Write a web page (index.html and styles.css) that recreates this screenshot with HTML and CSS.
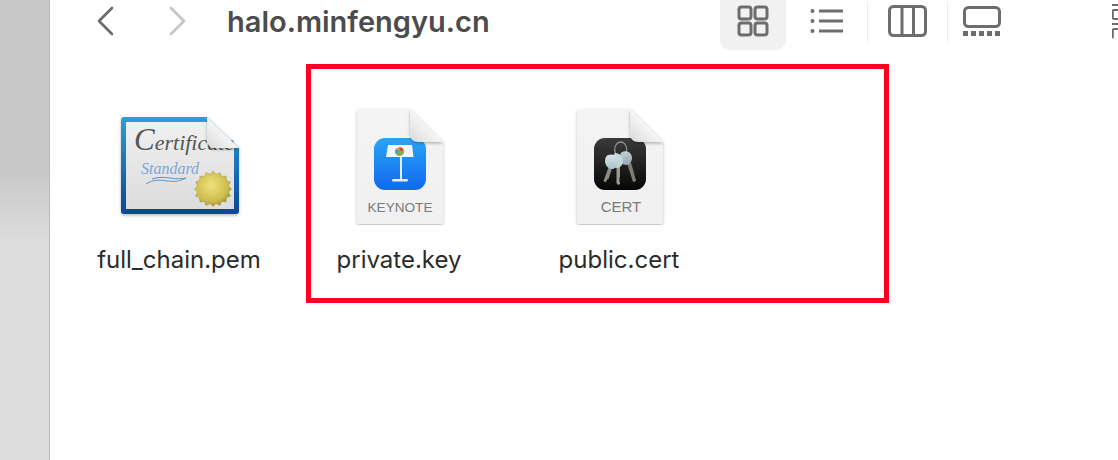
FILE: index.html
```html
<!DOCTYPE html>
<html lang="en">
<head>
<meta charset="utf-8">
<title>halo.minfengyu.cn</title>
<link rel="stylesheet" href="styles.css">
</head>
<body>
<div class="window">
  <aside class="sidebar"></aside>
  <main class="main">
    <header class="toolbar">
      <svg class="nav" width="18" height="30" viewBox="0 0 18 30"><path d="M16 2 3 15l13 13" class="chev"/></svg>
      <svg class="nav nav-forward" width="18" height="30" viewBox="0 0 18 30"><path d="M2 2l13 13L2 28" class="chev chev-off"/></svg>
      <h1 class="title">halo.minfengyu.cn</h1>
      <div class="tools">
        <div class="tool tool-active">
          <svg width="32" height="32" viewBox="0 0 32 32" class="ico"><rect x="2" y="2" width="12" height="12" rx="2.5"/><rect x="18" y="2" width="12" height="12" rx="2.5"/><rect x="2" y="18" width="12" height="12" rx="2.5"/><rect x="18" y="18" width="12" height="12" rx="2.5"/></svg>
        </div>
        <div class="tool tool-list">
          <svg width="34" height="26" viewBox="0 0 34 26" class="ico"><path d="M9 3h24M9 13h24M9 23h24"/><circle cx="2.5" cy="3" r="2" class="dot"/><circle cx="2.5" cy="13" r="2" class="dot"/><circle cx="2.5" cy="23" r="2" class="dot"/></svg>
        </div>
        <span class="sep"></span>
        <div class="tool tool-cols">
          <svg width="39" height="32" viewBox="0 0 39 32" class="ico"><rect x="1.500" y="1.500" width="36" height="29" rx="4"/><path d="M14 1.500v29M25.500 1.500v29"/></svg>
        </div>
        <span class="sep sep-2"></span>
        <div class="tool tool-gallery">
          <svg width="38" height="30" viewBox="0 0 38 30" class="ico"><rect x="1.500" y="1.500" width="35" height="19" rx="4"/><g class="dots"><rect x="0" y="25" width="5" height="5"/><rect x="8" y="25" width="5" height="5"/><rect x="16" y="25" width="5" height="5"/><rect x="24" y="25" width="5" height="5"/><rect x="32" y="25" width="5" height="5"/></g></svg>
        </div>
        <div class="tool-stub">
          <svg width="6" height="36" viewBox="0 0 6 36" class="ico ico-thin"><path d="M0 1h6M6 6H2a1.200 1.200 0 0 0-1.200 1.200v6.600A1.200 1.200 0 0 0 2 15h4M0 20h6M6 25H2a1.200 1.200 0 0 0-1.200 1.200v8"/></svg>
        </div>
      </div>
    </header>

    <section class="files">
      <figure class="file">
        <svg class="icon" width="140" height="120" viewBox="0 0 140 120">
          <defs>
            <linearGradient id="frame" x1="0" y1="0" x2="0" y2="1"><stop offset="0" stop-color="#2f9fd2"/><stop offset=".5" stop-color="#1b72b6"/><stop offset="1" stop-color="#0b4795"/></linearGradient>
            <linearGradient id="paper" x1="0" y1="0" x2="0" y2="1"><stop offset="0" stop-color="#f0f0f0"/><stop offset="1" stop-color="#dcdcdc"/></linearGradient>
            <linearGradient id="fold" x1="0" y1="1" x2="1" y2="0"><stop offset="0" stop-color="#d9d9d9"/><stop offset=".55" stop-color="#f8f8f8"/><stop offset="1" stop-color="#fff"/></linearGradient>
            <radialGradient id="seal" cx=".45" cy=".4" r=".65"><stop offset="0" stop-color="#efe27f"/><stop offset=".7" stop-color="#cdbc4c"/><stop offset="1" stop-color="#8f852a"/></radialGradient>
            <linearGradient id="doc" x1="0" y1="0" x2="0" y2="1"><stop offset="0" stop-color="#f4f4f4"/><stop offset="1" stop-color="#f0f0f0"/></linearGradient>
            <linearGradient id="knt" x1="0" y1="0" x2="0" y2="1"><stop offset="0" stop-color="#28a6f5"/><stop offset="1" stop-color="#1268f0"/></linearGradient>
            <linearGradient id="blk" x1="0" y1="0" x2="0" y2="1"><stop offset="0" stop-color="#3b3b3b"/><stop offset="1" stop-color="#060606"/></linearGradient>
            <linearGradient id="head" x1="0" y1="0" x2="0" y2="1"><stop offset="0" stop-color="#d8e6e9"/><stop offset="1" stop-color="#a9c2cb"/></linearGradient>
            <filter id="sh" x="-10%" y="-10%" width="120%" height="120%"><feDropShadow dx="0" dy="1.500" stdDeviation="1.500" flood-color="#000" flood-opacity=".28"/></filter>
          </defs>
          <path d="M14 12h83l32 31v63a3 3 0 0 1-3 3H14a3 3 0 0 1-3-3V15a3 3 0 0 1 3-3z" fill="url(#frame)" filter="url(#sh)"/>
          <path d="M16 17h81l27 26v61H16z" fill="url(#paper)"/>
          <text x="24" y="45" class="cert-a"><tspan class="cert-cap">C</tspan>ertificate</text>
          <text x="31" y="69" class="cert-b">Standard</text>
          <path d="M36 79c8-5 14-4 22-3 7 1 12 0 18-3" class="swash"/>
          <path d="M42 74c6-2 12-2 18-1s11 1 16 0" class="swash"/>
          <path d="M103 66l3 3.500 4-2 1.500 4 4.500-.5.500 4.500 4 1.500-2 4 3 3-3 3 2 4-4 1.500-.5 4.500-4.500-.5-1.500 4-4-2-3 3-3-3-4 2-1.500-4-4.500.5-.5-4.500-4-1.500 2-4-3-3 3-3-2-4 4-1.500.5-4.500 4.500.5 1.500-4 4 2z" fill="url(#seal)" stroke="#a59b3e" stroke-width=".5"/>
          <path d="M97 12l32 31H106c-6 0-9-3-9-9z" fill="url(#fold)" filter="url(#sh)"/>
        </svg>
        <figcaption class="name">full_chain.pem</figcaption>
      </figure>

      <figure class="file">
        <svg class="icon" width="140" height="120" viewBox="0 0 140 120">
          <path d="M30 4h50l33 33v79a3 3 0 0 1-3 3H30a3 3 0 0 1-3-3V7a3 3 0 0 1 3-3z" fill="url(#doc)" filter="url(#sh)"/>
          <rect x="44" y="33" width="52" height="52" rx="11" fill="url(#knt)"/>
          <path d="M58 40h24l1.500 12H56z" fill="#f4f7fb"/>
          <circle cx="69.500" cy="46.500" r="4.300" fill="#e9a12d"/>
          <path d="M69.500 46.500V42.200a4.300 4.300 0 0 1 4.200 3.400z" fill="#d8453e"/>
          <path d="M69.500 46.500l-3.600 2.400a4.300 4.300 0 0 1 .3-5.200z" fill="#3f9be0"/>
          <path d="M69.500 46.500l4.200-.9a4.300 4.300 0 0 1-7.800 3.300z" fill="#6cb944"/>
          <rect x="70" y="52" width="2" height="23" fill="#e6eef8"/>
          <rect x="62" y="74" width="16" height="2.500" rx="1.200" fill="#e6eef8"/>
          <text x="70" y="107" class="doc-label doc-label-k">KEYNOTE</text>
          <path d="M80 4l33 33H89c-6 0-9-3-9-9z" fill="url(#fold)" filter="url(#sh)"/>
        </svg>
        <figcaption class="name">private.key</figcaption>
      </figure>

      <figure class="file">
        <svg class="icon" width="140" height="120" viewBox="0 0 140 120">
          <path d="M30 4h50l33 33v79a3 3 0 0 1-3 3H30a3 3 0 0 1-3-3V7a3 3 0 0 1 3-3z" fill="url(#doc)" filter="url(#sh)"/>
          <rect x="44" y="33" width="52" height="52" rx="11" fill="url(#blk)"/>
          <ellipse cx="70.700" cy="44.500" rx="6" ry="7.500" fill="none" stroke="#8f8f8f" stroke-width="1.300"/>
          <path d="M59 61 53.500 76l1.500 1 1.500-.5.500-2 1.500-.5 4-12z" fill="#8d8a80"/>
          <path d="M66.500 61v17l1.500 2 2-1v-2l-1-1 1-1.500-1-1.500 1-1V61z" fill="#9a978c"/>
          <path d="M77 58l6 19 2-.5 1-1-5-18z" fill="#7f7c72"/>
          <path d="M72 47c5-2 10 1 10 6 0 4-3 7-6 7-4 0-6-3-6-6s0-6 2-7z" fill="url(#head)" opacity=".85"/>
          <path d="M65 48c5 0 8 4 8 8s-3 7-6 7-5-3-5-6 1-7 3-9z" fill="#c2d6dc"/>
          <path d="M58 50c6-2 10 2 10 7s-3 7-6 7-7-3-7-8c0-3 1-5 3-6z" fill="url(#head)"/>
          <text x="71" y="107" class="doc-label">CERT</text>
          <path d="M80 4l33 33H89c-6 0-9-3-9-9z" fill="url(#fold)" filter="url(#sh)"/>
        </svg>
        <figcaption class="name">public.cert</figcaption>
      </figure>
    </section>
  </main>
  <div class="highlight"></div>
</div>
</body>
</html>
```

FILE: styles.css
```css
* { box-sizing: border-box; }
html, body { margin: 0; padding: 0; }
body {
  background: #fff;
  font-family: "Inter", "Liberation Sans", sans-serif;
  overflow: hidden;
}
.window {
  position: relative;
  display: flex;
  width: 1118px;
  height: 460px;
}
.sidebar {
  width: 50px;
  flex: none;
  background: linear-gradient(#c8c8c8 0, #c8c8c8 170px, #dddddd 245px, #dddddd 100%);
  border-right: 1px solid #bcbcbc;
}
.main {
  flex: 1;
  min-width: 0;
  display: flex;
  flex-direction: column;
}
.toolbar {
  display: flex;
  align-items: flex-start;
  height: 50px;
  padding-left: 46px;
}
.nav { margin-top: 6px; flex: none; }
.nav-forward { margin-left: 55px; }
.chev {
  fill: none;
  stroke: #6a6a6a;
  stroke-width: 2.600;
  stroke-linecap: round;
  stroke-linejoin: round;
}
.chev-off { stroke: #c4c4c4; }
.title {
  margin: 0 0 0 40px;
  font-size: 29px;
  line-height: 44px;
  font-weight: 600;
  color: #4c4c4c;
  white-space: nowrap;
}
.tools {
  width: 398px;
  margin-left: auto;
  display: flex;
  align-items: flex-start;
}
.ico { display: block; fill: none; stroke: #6d6d6d; stroke-width: 3; }
.ico-thin { stroke-width: 2; }
.ico .dot { fill: #6d6d6d; stroke: none; }
.ico .dots rect { fill: #6d6d6d; stroke: none; }
.tool-active {
  width: 66px;
  height: 50px;
  padding: 5px 0 0 17px;
  background: #f1f1f1;
  border-radius: 0 0 10px 10px;
}
.tool-list { margin: 8px 0 0 24px; }
.sep {
  width: 1px;
  height: 40px;
  margin: 2px 0 0 23px;
  background: #ececec;
}
.tool-cols { margin: 5px 0 0 20px; }
.sep-2 { margin-left: 20px; }
.tool-gallery { margin: 6px 0 0 15px; }
.tool-stub { margin: 4px 0 0 auto; }
.files {
  display: flex;
  padding: 55px 0 0 20px;
}
.file {
  width: 220px;
  margin: 0;
  display: flex;
  flex-direction: column;
  align-items: center;
}
.icon { display: block; }
.name {
  margin: 20px 2px 0 0;
  font-size: 24px;
  line-height: 30px;
  color: #2b2b2b;
  white-space: nowrap;
}
.doc-label {
  font-family: "Liberation Sans", sans-serif;
  font-size: 15px;
  fill: #7a7a7a;
  text-anchor: middle;
}
.doc-label-k { font-size: 13.600px; }
.cert-a {
  font-family: "Liberation Serif", serif;
  font-style: italic;
  font-size: 22px;
  fill: #555;
}
.cert-cap { font-size: 31px; }
.cert-b {
  font-family: "Liberation Serif", serif;
  font-style: italic;
  font-size: 16px;
  fill: #7ba6da;
}
.swash { fill: none; stroke: #5c93cf; stroke-width: 1; }
.highlight {
  position: absolute;
  left: 306px;
  top: 64px;
  width: 583px;
  height: 239px;
  border: 5px solid #fe0022;
}
```
